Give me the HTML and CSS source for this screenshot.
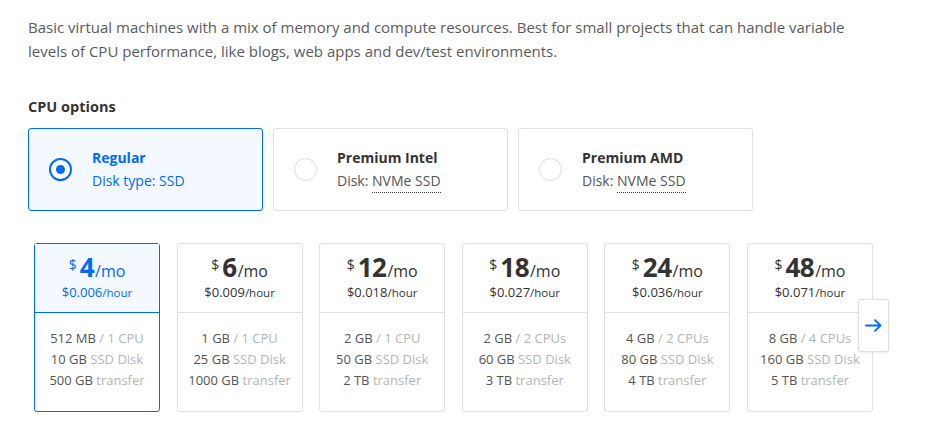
FILE: index.html
```html
<!DOCTYPE html>
<html>
<head>
<meta charset="utf-8">
<link rel="stylesheet" href="styles.css">
</head>
<body>
<div class="page">
  <p class="desc">Basic virtual machines with a mix of memory and compute resources. Best for small projects that can handle variable levels of CPU performance, like blogs, web apps and dev/test environments.</p>

  <h3 class="section-title">CPU options</h3>

  <div class="options">
    <div class="option selected">
      <span class="radio"><span class="dot"></span></span>
      <div class="option-text">
        <div class="option-title">Regular</div>
        <div class="option-sub">Disk type: SSD</div>
      </div>
    </div>
    <div class="option">
      <span class="radio"></span>
      <div class="option-text">
        <div class="option-title">Premium Intel</div>
        <div class="option-sub">Disk: <span class="dotted">NVMe SSD</span></div>
      </div>
    </div>
    <div class="option">
      <span class="radio"></span>
      <div class="option-text">
        <div class="option-title">Premium AMD</div>
        <div class="option-sub">Disk: <span class="dotted">NVMe SSD</span></div>
      </div>
    </div>
  </div>

  <div class="plans-wrap">
    <div class="plans">
      <div class="plan selected">
        <div class="plan-head">
          <div class="price"><span class="cur">$</span><span class="amt">4</span><span class="per">/mo</span></div>
          <div class="hourly">$0.006<span class="per-h">/hour</span></div>
        </div>
        <div class="plan-body">
          <div>512 MB <span class="lbl">/ 1 CPU</span></div>
          <div>10 GB <span class="lbl">SSD Disk</span></div>
          <div>500 GB <span class="lbl">transfer</span></div>
        </div>
      </div>
      <div class="plan">
        <div class="plan-head">
          <div class="price"><span class="cur">$</span><span class="amt">6</span><span class="per">/mo</span></div>
          <div class="hourly">$0.009<span class="per-h">/hour</span></div>
        </div>
        <div class="plan-body">
          <div>1 GB <span class="lbl">/ 1 CPU</span></div>
          <div>25 GB <span class="lbl">SSD Disk</span></div>
          <div>1000 GB <span class="lbl">transfer</span></div>
        </div>
      </div>
      <div class="plan">
        <div class="plan-head">
          <div class="price"><span class="cur">$</span><span class="amt">12</span><span class="per">/mo</span></div>
          <div class="hourly">$0.018<span class="per-h">/hour</span></div>
        </div>
        <div class="plan-body">
          <div>2 GB <span class="lbl">/ 1 CPU</span></div>
          <div>50 GB <span class="lbl">SSD Disk</span></div>
          <div>2 TB <span class="lbl">transfer</span></div>
        </div>
      </div>
      <div class="plan">
        <div class="plan-head">
          <div class="price"><span class="cur">$</span><span class="amt">18</span><span class="per">/mo</span></div>
          <div class="hourly">$0.027<span class="per-h">/hour</span></div>
        </div>
        <div class="plan-body">
          <div>2 GB <span class="lbl">/ 2 CPUs</span></div>
          <div>60 GB <span class="lbl">SSD Disk</span></div>
          <div>3 TB <span class="lbl">transfer</span></div>
        </div>
      </div>
      <div class="plan">
        <div class="plan-head">
          <div class="price"><span class="cur">$</span><span class="amt">24</span><span class="per">/mo</span></div>
          <div class="hourly">$0.036<span class="per-h">/hour</span></div>
        </div>
        <div class="plan-body">
          <div>4 GB <span class="lbl">/ 2 CPUs</span></div>
          <div>80 GB <span class="lbl">SSD Disk</span></div>
          <div>4 TB <span class="lbl">transfer</span></div>
        </div>
      </div>
      <div class="plan">
        <div class="plan-head">
          <div class="price"><span class="cur">$</span><span class="amt">48</span><span class="per">/mo</span></div>
          <div class="hourly">$0.071<span class="per-h">/hour</span></div>
        </div>
        <div class="plan-body">
          <div>8 GB <span class="lbl">/ 4 CPUs</span></div>
          <div>160 GB <span class="lbl">SSD Disk</span></div>
          <div>5 TB <span class="lbl">transfer</span></div>
        </div>
      </div>
    </div>
    <button class="next" aria-label="Next">
      <svg width="17" height="13" viewBox="0 0 17 13"><path d="M1 6.5h14.5M10 1.2l5.5 5.3-5.5 5.3" fill="none" stroke="#0069ff" stroke-width="1.8" stroke-linecap="round" stroke-linejoin="round"/></svg>
    </button>
  </div>
</div>
</body>
</html>
```

FILE: styles.css
```css
* { box-sizing: border-box; }
body {
  margin: 0;
  background: #fff;
  font-family: "Open Sans", Lato, sans-serif;
  color: #333;
}
.page {
  padding: 15px 0 0 28px;
  width: 945px;
}
.desc {
  margin: 0;
  width: 830px;
  font-size: 15px;
  line-height: 24px;
  color: #5b5b5b;
}
.section-title {
  margin: 34px 0 0;
  font-size: 14.5px;
  line-height: 20px;
  font-weight: 700;
  color: #333;
}
.options {
  margin-top: 11px;
  display: flex;
  gap: 10px;
}
.option {
  width: 235px;
  height: 83px;
  border: 1px solid #dfdfdf;
  border-radius: 3px;
  display: flex;
  align-items: center;
  padding-left: 20px;
  gap: 20px;
  background: #fff;
}
.option.selected {
  border-color: #0069ff;
  background: #f4f8ff;
}
.radio {
  width: 23px;
  height: 23px;
  border-radius: 50%;
  border: 1px solid #dcdcdc;
  display: flex;
  align-items: center;
  justify-content: center;
  flex: none;
  background: #fff;
}
.option.selected .radio {
  border: 2px solid #0069ff;
}
.dot {
  width: 9px;
  height: 9px;
  border-radius: 50%;
  background: #0069ff;
}
.option-title {
  font-size: 14px;
  font-weight: 700;
  line-height: 20px;
  color: #333;
}
.option-sub {
  margin-top: 3px;
  font-size: 14px;
  line-height: 20px;
  color: #555;
}
.option.selected .option-title,
.option.selected .option-sub { color: #0069ff; }
.dotted {
  border-bottom: 1px dotted #444;
  padding-bottom: 2px;
}
.plans-wrap {
  position: relative;
  margin-top: 32px;
  margin-left: 6px;
}
.plans {
  display: flex;
  gap: 16.6px;
}
.plan {
  width: 126px;
  height: 169px;
  border: 1px solid #e0e0e0;
  border-radius: 3px;
  text-align: center;
  background: #fff;
}
.plan.selected {
  border-color: #0069ff;
}
.plan-head {
  height: 69px;
  border-bottom: 1px solid #e0e0e0;
  padding-top: 10px;
  color: #333;
}
.plan.selected .plan-head {
  background: #f4f8ff;
  border-bottom-color: #0069ff;
  color: #0069ff;
}
.price {
  height: 27px;
  line-height: 27px;
  font-size: 14px;
}
.cur, .amt, .per {
  display: inline-block;
  line-height: 22px;
}
.cur {
  font-size: 14px;
  vertical-align: 7px;
  margin-right: 3px;
}
.amt {
  font-size: 26px;
  font-weight: 700;
  letter-spacing: -0.5px;
}
.per {
  font-size: 16px;
  margin-left: 1px;
}
.hourly {
  margin-top: 3px;
  font-size: 13px;
  line-height: 16px;
}
.per-h { font-size: 11.5px; }
.plan-body {
  padding-top: 15px;
  font-size: 13px;
  line-height: 21px;
  color: #555;
}
.lbl { color: #b5b5b5; }
.next {
  position: absolute;
  left: 824px;
  top: 56px;
  width: 31px;
  height: 53px;
  padding: 0;
  border: 1px solid #dedede;
  border-radius: 3px;
  background: #fff;
  box-shadow: 0 1px 3px rgba(0,0,0,0.08);
  display: flex;
  align-items: center;
  justify-content: center;
  cursor: pointer;
}
```
